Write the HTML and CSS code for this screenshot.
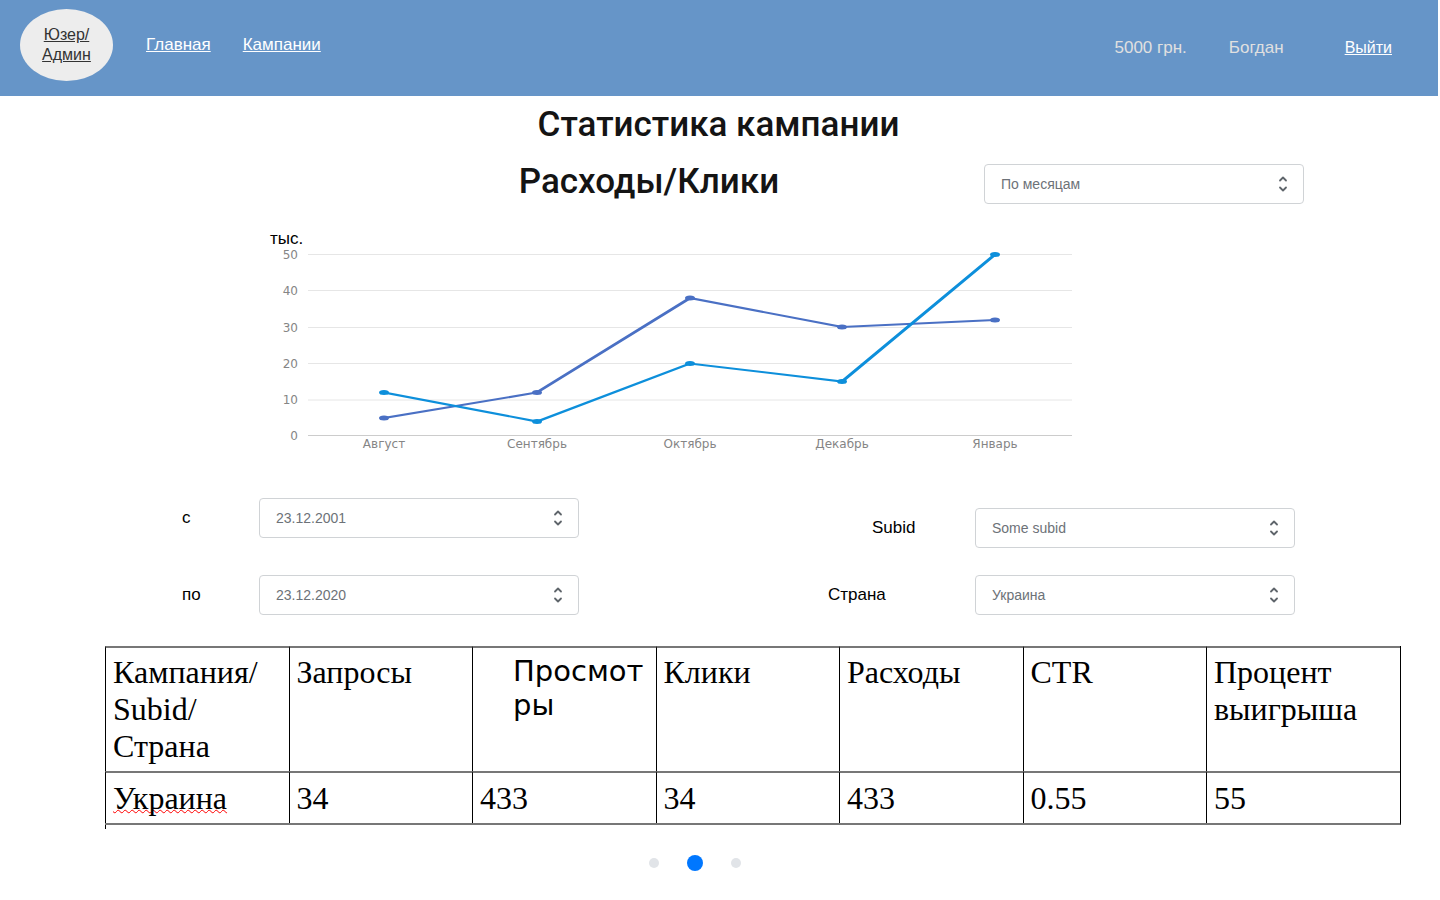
FILE: index.html
```html
<!DOCTYPE html>
<html lang="ru">
<head>
<meta charset="utf-8">
<title>Статистика кампании</title>
<meta name="viewport" content="width=device-width, initial-scale=1">
<link rel="stylesheet" href="styles.css">
</head>
<body>
<svg class="sprite" aria-hidden="true">
  <symbol id="updown" viewBox="0 0 16 24">
    <path d="M5 8.500 8 5.500l3 3M5 15.500l3 3 3-3" fill="none" stroke="currentColor" stroke-width="1.8" stroke-linecap="round" stroke-linejoin="round"/>
  </symbol>
</svg>

<header class="topbar">
  <a class="avatar" href="#">Юзер/<br>Админ</a>
  <nav class="nav">
    <a href="#">Главная</a>
    <a href="#">Кампании</a>
  </nav>
  <div class="account">
    <span class="balance">5000 грн.</span>
    <span class="user">Богдан</span>
    <a class="logout" href="#">Выйти</a>
  </div>
</header>

<main class="page">
  <h1 class="title">Статистика кампании</h1>

  <div class="chart-head">
    <h2 class="title">Расходы/Клики</h2>
    <div class="select">
      <select aria-label="Период"><option>По месяцам</option></select>
      <svg class="select-icon" aria-hidden="true"><use href="#updown"/></svg>
    </div>
  </div>

  <figure class="chart">
    <figcaption>тыс.</figcaption>
    <svg class="plot" viewBox="0 0 802 206" role="img" aria-label="Расходы и клики по месяцам">
      <g class="grid">
        <path d="M38 6.5H802M38 42.5H802M38 79.5H802M38 115.5H802M38 152H802"/>
        <path class="axis" d="M38 187.5H802"/>
      </g>
      <g class="ticks">
        <text x="28" y="11">50</text>
        <text x="28" y="47">40</text>
        <text x="28" y="84">30</text>
        <text x="28" y="120">20</text>
        <text x="28" y="156">10</text>
        <text x="28" y="192">0</text>
      </g>
      <g class="months">
        <text x="114" y="200">Август</text>
        <text x="267" y="200">Сентябрь</text>
        <text x="420" y="200">Октябрь</text>
        <text x="572" y="200">Декабрь</text>
        <text x="725" y="200">Январь</text>
      </g>
      <g class="costs" transform="scale(2 1)">
        <polyline points="57,170 133.5,144.5 210,50 286,79 362.5,72"/>
        <circle cx="57" cy="170" r="2.5"/>
        <circle cx="133.5" cy="144.5" r="2.5"/>
        <circle cx="210" cy="50" r="2.5"/>
        <circle cx="286" cy="79" r="2.5"/>
        <circle cx="362.5" cy="72" r="2.5"/>
      </g>
      <g class="clicks" transform="scale(2 1)">
        <polyline points="57,144.5 133.5,173.5 210,115.5 286,133.5 362.5,6.5"/>
        <circle cx="57" cy="144.5" r="2.5"/>
        <circle cx="133.5" cy="173.5" r="2.5"/>
        <circle cx="210" cy="115.5" r="2.5"/>
        <circle cx="286" cy="133.5" r="2.5"/>
        <circle cx="362.5" cy="6.5" r="2.5"/>
      </g>
    </svg>
  </figure>

  <form class="filters">
    <div class="dates">
      <div class="field">
        <label for="from">с</label>
        <div class="select">
          <select id="from"><option>23.12.2001</option></select>
          <svg class="select-icon" aria-hidden="true"><use href="#updown"/></svg>
        </div>
      </div>
      <div class="field">
        <label for="to">по</label>
        <div class="select">
          <select id="to"><option>23.12.2020</option></select>
          <svg class="select-icon" aria-hidden="true"><use href="#updown"/></svg>
        </div>
      </div>
    </div>
    <div class="scope">
      <div class="field">
        <label class="indent" for="subid">Subid</label>
        <div class="select">
          <select id="subid"><option>Some subid</option></select>
          <svg class="select-icon" aria-hidden="true"><use href="#updown"/></svg>
        </div>
      </div>
      <div class="field">
        <label for="country">Страна</label>
        <div class="select">
          <select id="country"><option>Украина</option></select>
          <svg class="select-icon" aria-hidden="true"><use href="#updown"/></svg>
        </div>
      </div>
    </div>
  </form>

  <div class="report">
    <table>
      <colgroup><col span="6" class="col"><col></colgroup>
      <thead>
        <tr>
          <th scope="col">Кампания/<br>Subid/<br>Страна</th>
          <th scope="col">Запросы</th>
          <th scope="col" class="views">Просмот<br>ры</th>
          <th scope="col">Клики</th>
          <th scope="col">Расходы</th>
          <th scope="col">CTR</th>
          <th scope="col">Процент выигрыша</th>
        </tr>
      </thead>
      <tbody>
        <tr>
          <td><span class="misspelt">Украина</span></td>
          <td>34</td>
          <td>433</td>
          <td>34</td>
          <td>433</td>
          <td>0.55</td>
          <td>55</td>
        </tr>
      </tbody>
    </table>
  </div>

  <div class="pager">
    <button type="button" aria-label="Страница 1"></button>
    <button type="button" class="current" aria-label="Страница 2" aria-current="true"></button>
    <button type="button" aria-label="Страница 3"></button>
  </div>
</main>
</body>
</html>
```
FILE: styles.css
```css
* { box-sizing: border-box; }

body {
  margin: 0;
  background: #fff;
  color: #000;
  font: 17px/20px "Liberation Sans", Arial, sans-serif;
}

.sprite { display: none; }

.topbar {
  display: flex;
  align-items: center;
  min-height: 96px;
  margin-right: 2px;
  padding: 0 46px 0 20px;
  background: #6695c8;
}

.avatar {
  display: grid;
  place-content: center;
  width: 93px;
  height: 72px;
  margin-bottom: 6px;
  border-radius: 50%;
  background: #ededed;
  color: #333;
  font-size: 16px;
  text-align: center;
}

.nav {
  display: flex;
  gap: 32px;
  margin: 0 auto 6px 33px;
}

.nav a, .logout { color: #fff; }

.account {
  display: flex;
  align-items: center;
  color: #e0e0e0;
}

.user { margin: 0 61px 0 42px; }
.logout { font-size: 16px; }

.title {
  margin: 0;
  color: #141414;
  font: 500 35px/44px Roboto, sans-serif;
  text-align: center;
}

.page { padding-top: 7px; }
.page > .title { margin-right: 3px; }

.chart-head {
  display: grid;
  grid-template-columns: 1fr 320px;
  align-items: end;
  margin-top: 13px;
  padding: 0 136px 0 314px;
}

.select {
  position: relative;
  width: 320px;
}

.select select {
  display: block;
  width: 100%;
  height: 40px;
  padding: 0 40px 0 16px;
  border: 1px solid #d0d3d6;
  border-radius: 4px;
  background: #fff;
  color: #6d7278;
  font: 14px/20px "Liberation Sans", Arial, sans-serif;
  appearance: none;
}

.select-icon {
  position: absolute;
  top: 8px;
  right: 13px;
  width: 16px;
  height: 24px;
  color: #5f656b;
  pointer-events: none;
}

.chart {
  width: 802px;
  max-width: 100%;
  margin: 26px 0 0 270px;
}

.chart figcaption { line-height: 18px; }

.plot { display: block; width: 100%; }
.grid path { fill: none; stroke: #e6e6e6; stroke-width: 1; }
.grid .axis { stroke: #ccc; }
.ticks, .months { fill: #858585; font: 12px "DejaVu Sans", sans-serif; }
.ticks { text-anchor: end; }
.months { text-anchor: middle; }
.costs, .clicks { stroke-width: 2; }
.costs { fill: #4a70c4; stroke: #4a70c4; }
.clicks { fill: #0d8fdb; stroke: #0d8fdb; }
.chart polyline { fill: none; }
.chart circle { stroke: none; }

.filters {
  display: flex;
  justify-content: space-between;
  align-items: flex-end;
  margin-top: 44px;
  padding: 0 145px 0 182px;
}

.dates, .scope { display: grid; }
.dates { gap: 37px; }
.scope { gap: 27px; }

.field {
  display: grid;
  grid-template-columns: 77px 320px;
  align-items: center;
}

.scope .field { grid-template-columns: 147px 320px; }
.indent { padding-left: 44px; }

.report {
  margin: 31px 39px 0 105px;
}

.report table {
  width: 100%;
  table-layout: fixed;
  border-collapse: separate;
  border-spacing: 0;
  border-right: 1px solid #000;
  border-bottom: 2px solid #777;
  font: 32px/37px "Liberation Serif", "Times New Roman", serif;
}

.col { width: 14.17%; }

.report th, .report td {
  padding: 6px 7px;
  border-top: 2px solid #777;
  border-left: 1px solid #000;
  font-weight: 400;
  text-align: left;
  vertical-align: top;
}

.report td { padding-top: 7px; }

.report .views {
  padding: 6px 0 6px 40px;
  font: 29px/34px "DejaVu Sans", sans-serif;
}

.misspelt {
  text-decoration: underline wavy #f00 1px;
  text-decoration-skip-ink: none;
  text-underline-offset: 0;
}

/* The left rule runs on a little below the last row. */
.report::after {
  content: "";
  display: block;
  width: 1px;
  height: 4px;
  background: #000;
}

.pager {
  display: flex;
  justify-content: center;
  align-items: center;
  gap: 28px;
  margin: 26px 50px 0 0;
}

.pager button {
  width: 10px;
  height: 10px;
  padding: 0;
  border: 0;
  border-radius: 50%;
  background: #e1e4e8;
}

.pager .current {
  width: 16px;
  height: 16px;
  background: #07f;
}
```
